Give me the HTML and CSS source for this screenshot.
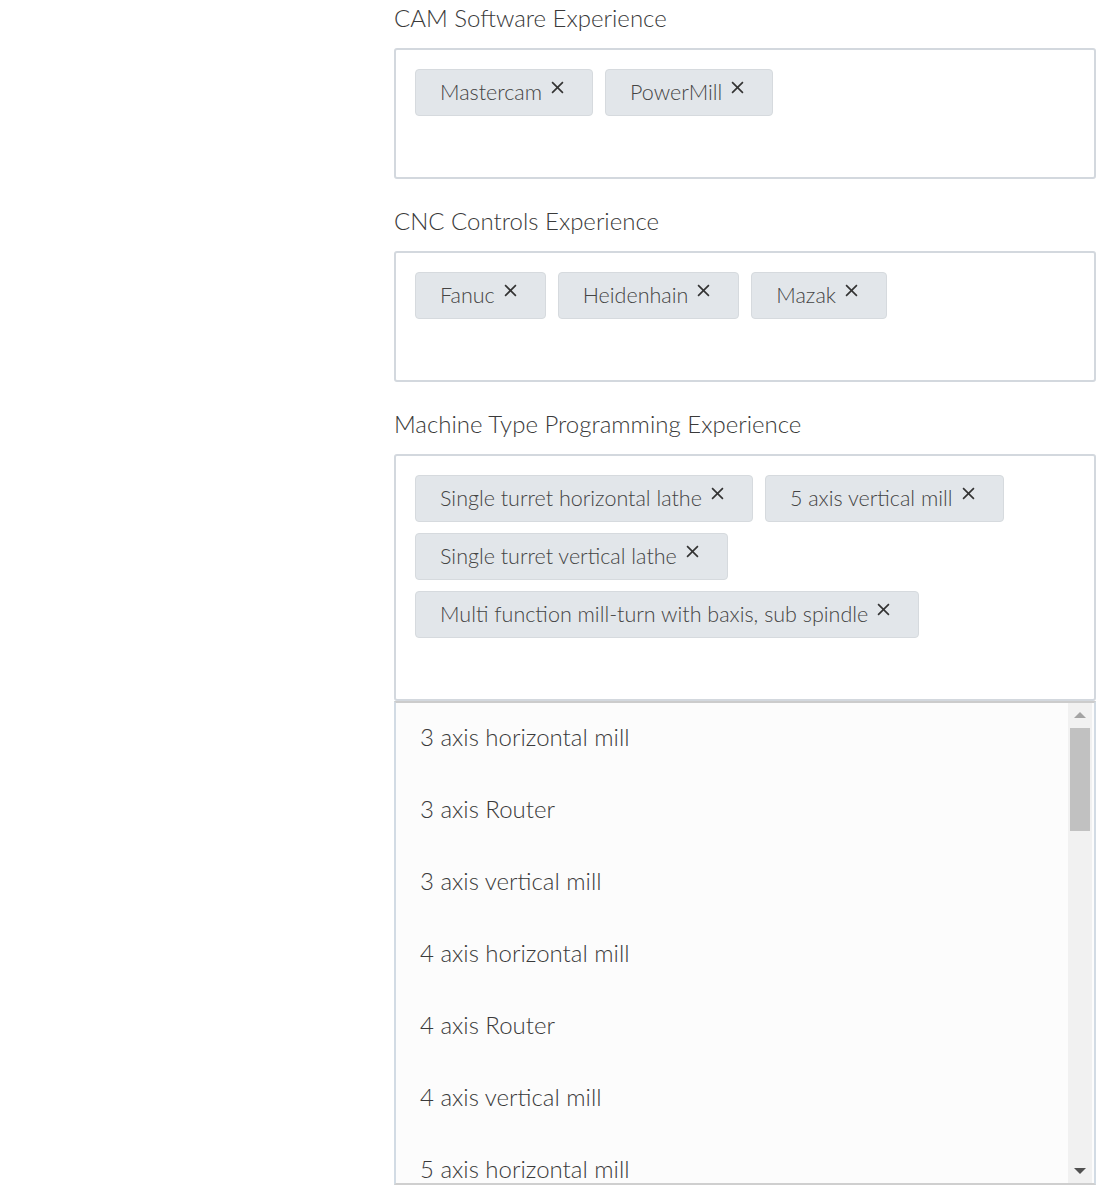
FILE: index.html
```html
<!DOCTYPE html>
<html>
<head>
<meta charset="utf-8">
<link rel="stylesheet" href="styles.css">
</head>
<body>
<div class="page">
  <div class="group">
    <div class="label">CAM Software Experience</div>
    <div class="box">
      <span class="tag"><span class="tag-text">Mastercam</span><svg class="x" viewBox="0 0 12 12"><path d="M1 1L11 11M11 1L1 11"/></svg></span>
      <span class="tag"><span class="tag-text">PowerMill</span><svg class="x" viewBox="0 0 12 12"><path d="M1 1L11 11M11 1L1 11"/></svg></span>
    </div>
  </div>
  <div class="group">
    <div class="label">CNC Controls Experience</div>
    <div class="box">
      <span class="tag"><span class="tag-text">Fanuc</span><svg class="x" viewBox="0 0 12 12"><path d="M1 1L11 11M11 1L1 11"/></svg></span>
      <span class="tag"><span class="tag-text">Heidenhain</span><svg class="x" viewBox="0 0 12 12"><path d="M1 1L11 11M11 1L1 11"/></svg></span>
      <span class="tag"><span class="tag-text">Mazak</span><svg class="x" viewBox="0 0 12 12"><path d="M1 1L11 11M11 1L1 11"/></svg></span>
    </div>
  </div>
  <div class="group last">
    <div class="label">Machine Type Programming Experience</div>
    <div class="box">
      <span class="tag"><span class="tag-text">Single turret horizontal lathe</span><svg class="x" viewBox="0 0 12 12"><path d="M1 1L11 11M11 1L1 11"/></svg></span>
      <span class="tag"><span class="tag-text">5 axis vertical mill</span><svg class="x" viewBox="0 0 12 12"><path d="M1 1L11 11M11 1L1 11"/></svg></span>
      <span class="tag"><span class="tag-text">Single turret vertical lathe</span><svg class="x" viewBox="0 0 12 12"><path d="M1 1L11 11M11 1L1 11"/></svg></span>
      <span class="tag"><span class="tag-text">Multi function mill-turn with baxis, sub spindle</span><svg class="x" viewBox="0 0 12 12"><path d="M1 1L11 11M11 1L1 11"/></svg></span>
    </div>
    <div class="dropdown">
      <div class="options">
        <div class="option">3 axis horizontal mill</div>
        <div class="option">3 axis Router</div>
        <div class="option">3 axis vertical mill</div>
        <div class="option">4 axis horizontal mill</div>
        <div class="option">4 axis Router</div>
        <div class="option">4 axis vertical mill</div>
        <div class="option">5 axis horizontal mill</div>
        <div class="option">5 axis Router</div>
      </div>
      <div class="scrollbar">
        <div class="arrow up"></div>
        <div class="track"><div class="thumb"></div></div>
        <div class="arrow down"></div>
      </div>
    </div>
  </div>
</div>
</body>
</html>
```
FILE: styles.css
```css
html, body {
  margin: 0;
  padding: 0;
  background: #ffffff;
}
body {
  font-family: "Lato", "Noto Sans", sans-serif;
  font-weight: 300;
  color: #3b3b3b;
  height: 1193px;
  overflow: hidden;
}
.page {
  margin-left: 394px;
  width: 702px;
}
.group {
  margin-bottom: 24px;
}
.label {
  font-size: 24px;
  line-height: 36px;
  margin-bottom: 12px;
  color: #3a3a3a;
}
.box {
  box-sizing: border-box;
  border: 2px solid #d3d8de;
  border-radius: 3px;
  padding: 19px 19px 61px 19px;
  display: flex;
  flex-wrap: wrap;
  row-gap: 11px;
  column-gap: 12px;
  align-content: flex-start;
}
.tag {
  box-sizing: border-box;
  height: 47px;
  display: inline-flex;
  align-items: center;
  background: #e2e6ea;
  border: 1px solid #d6dade;
  border-radius: 4px;
  padding: 0 28px 0 24px;
  font-size: 21.5px;
  color: #444;
}
.tag-text {
  line-height: 47px;
}
.x {
  width: 13px;
  height: 13px;
  margin-left: 9px;
  margin-bottom: 10px;
  stroke: #333;
  stroke-width: 1.5;
  fill: none;
}
.dropdown {
  box-sizing: border-box;
  height: 484px;
  border: 2px solid #cfcfcf;
  border-left-color: #d2dbe4;
  border-right-color: #d2dbe4;
  border-top: 2px solid #cccccc;
  background: #fcfcfc;
  display: flex;
  overflow: hidden;
}
.options {
  flex: 1;
  overflow: hidden;
}
.option {
  height: 72px;
  line-height: 68px;
  padding-left: 24px;
  font-size: 24px;
  color: #3a3a3a;
}
.scrollbar {
  width: 24px;
  margin-right: 2px;
  background: #f1f1f1;
  display: flex;
  flex-direction: column;
}
.arrow {
  height: 24px;
  display: flex;
  align-items: center;
  justify-content: center;
}
.arrow.up::before {
  content: "";
  border-left: 6px solid transparent;
  border-right: 6px solid transparent;
  border-bottom: 6px solid #a3a3a3;
}
.arrow.down::before {
  content: "";
  border-left: 6px solid transparent;
  border-right: 6px solid transparent;
  border-top: 6px solid #505050;
}
.track {
  flex: 1;
}
.thumb {
  height: 103px;
  margin: 1px 2px 0 2px;
  background: #c1c1c1;
}
```
